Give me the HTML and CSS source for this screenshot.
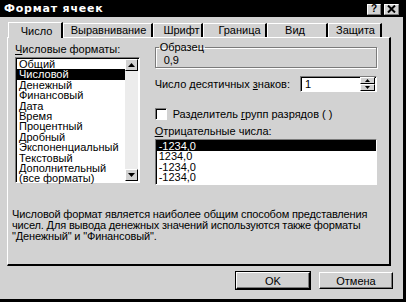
FILE: index.html
```html
<!DOCTYPE html>
<html>
<head>
    <meta charset="UTF-8">
    <title>Формат ячеек</title>
    <link rel="stylesheet" href="styles.css">
</head>
<body>
    <div class="window">
        <div class="titlebar">
            <span class="title">Формат ячеек</span>
            <div class="title-buttons">
                <span class="tbtn">?</span>
                <span class="tbtn tbtn-x">
                    <svg width="9" height="8" viewBox="0 0 9 8"><path d="M1 0.5 L8 7.5 M8 0.5 L1 7.5" stroke="#000" stroke-width="2"/></svg>
                </span>
            </div>
        </div>

        <div class="tabs">
            <div class="tab active">Число</div>
            <div class="tab">Выравнивание</div>
            <div class="tab">Шрифт</div>
            <div class="tab">Граница</div>
            <div class="tab">Вид</div>
            <div class="tab">Защита</div>
        </div>

        <div class="panel">
            <div class="columns">
                <div class="col-left">
                    <div class="label"><u>Ч</u>исловые форматы:</div>
                    <div class="listbox formats">
                        <ul class="items">
                            <li>Общий</li>
                            <li class="selected">Числовой</li>
                            <li>Денежный</li>
                            <li>Финансовый</li>
                            <li>Дата</li>
                            <li>Время</li>
                            <li>Процентный</li>
                            <li>Дробный</li>
                            <li>Экспоненциальный</li>
                            <li>Текстовый</li>
                            <li>Дополнительный</li>
                            <li>(все форматы)</li>
                        </ul>
                        <div class="scrollbar">
                            <div class="sbtn"><svg width="7" height="4" viewBox="0 0 7 4"><path d="M3.5 0 L7 4 L0 4 Z" fill="#000"/></svg></div>
                            <div class="track"></div>
                            <div class="sbtn"><svg width="7" height="4" viewBox="0 0 7 4"><path d="M0 0 L7 0 L3.5 4 Z" fill="#000"/></svg></div>
                        </div>
                    </div>
                </div>

                <div class="col-right">
                    <fieldset class="sample">
                        <legend>Образец</legend>
                        <div class="sample-value">0,9</div>
                    </fieldset>

                    <div class="decimals">
                        <span>Число десятичных <u>з</u>наков:</span>
                        <div class="spin">
                            <span class="spin-value">1</span>
                            <div class="spin-buttons">
                                <div class="spin-btn"><svg width="7" height="4" viewBox="0 0 7 4"><path d="M3.5 0 L7 4 L0 4 Z" fill="#000"/></svg></div>
                                <div class="spin-btn"><svg width="7" height="4" viewBox="0 0 7 4"><path d="M0 0 L7 0 L3.5 4 Z" fill="#000"/></svg></div>
                            </div>
                        </div>
                    </div>

                    <label class="check">
                        <span class="box"></span>
                        <span>Разделитель <u>г</u>рупп разрядов ( )</span>
                    </label>

                    <div class="label"><u>О</u>трицательные числа:</div>
                    <div class="listbox negatives">
                        <ul class="items">
                            <li class="selected">-1234,0</li>
                            <li>1234,0</li>
                            <li>-1234,0</li>
                            <li>-1234,0</li>
                        </ul>
                    </div>
                </div>
            </div>

            <p class="desc">Числовой формат является наиболее общим способом представления чисел. Для вывода денежных значений используются также форматы "Денежный" и "Финансовый".</p>
        </div>

        <div class="buttons">
            <button class="btn default">OK</button>
            <button class="btn">Отмена</button>
        </div>
    </div>
</body>
</html>
```

FILE: styles.css
```css
:root {
    --face: #d2d2d2;
    --light: #ffffff;
    --shadow: #7b7b7b;
    --dark: #000000;
}

* {
    margin: 0;
    padding: 0;
    box-sizing: border-box;
}

body {
    width: 406px;
    height: 302px;
    overflow: hidden;
    font-family: "Liberation Sans", Arial, sans-serif;
    font-size: 11px;
    color: #000;
    background: var(--face);
}

.window {
    width: 406px;
    height: 302px;
    background: var(--face);
    border-right: 3px solid var(--dark);
    border-bottom: 3px solid var(--dark);
    display: flex;
    flex-direction: column;
}

.titlebar {
    height: 17px;
    background: #000;
    display: flex;
    align-items: center;
    justify-content: space-between;
    padding: 0 4px 0 4px;
}

.title {
    color: #fff;
    font-family: "DejaVu Sans", sans-serif;
    font-weight: bold;
    font-size: 11px;
    letter-spacing: 0.8px;
}

.title-buttons {
    display: flex;
    gap: 3px;
    margin-top: 1px;
}

.tbtn {
    width: 14px;
    height: 11px;
    background: var(--face);
    border: 1px solid;
    border-color: var(--light) var(--shadow) var(--shadow) var(--light);
    display: flex;
    align-items: center;
    justify-content: center;
    font-weight: bold;
    font-size: 10px;
    line-height: 1;
}

.tbtn-x {
    width: 15px;
}

.tabs {
    display: flex;
    margin: 5px 0 0 8px;
    height: 15px;
    align-items: flex-end;
}

.tab {
    height: 14px;
    border-top: 1px solid var(--light);
    border-left: 1px solid var(--light);
    border-right: 2px solid var(--dark);
    font-size: 11px;
    line-height: 12px;
    text-align: center;
    white-space: nowrap;
    position: relative;
}

.tab.active {
    height: 16px;
    padding-top: 2px;
    margin-bottom: -1px;
    z-index: 1;
    background: var(--face);
}

.tab:nth-child(1) { width: 55px; padding-left: 3px; }
.tab:nth-child(2) { width: 90px; padding-left: 2px; }
.tab:nth-child(3) { width: 50px; padding-left: 8px; }
.tab:nth-child(4) { width: 64px; padding-left: 10px; }
.tab:nth-child(5) { width: 61px; padding-right: 4px; }
.tab:nth-child(6) { width: 54px; padding-left: 2px; }

.panel {
    margin: 0 12px 0 7px;
    height: 229px;
    border-top: 1px solid var(--light);
    border-left: 1px solid var(--light);
    border-right: 2px solid var(--dark);
    border-bottom: 2px solid var(--dark);
    padding: 5px 12px 0 7px;
    display: flex;
    flex-direction: column;
}

.columns {
    display: flex;
    gap: 15px;
}

.col-left {
    width: 125px;
    display: flex;
    flex-direction: column;
}

.col-right {
    width: 223px;
    display: flex;
    flex-direction: column;
}

.label {
    line-height: 12px;
}

.listbox {
    background: #fff;
    border: 1px solid;
    border-color: var(--shadow) var(--light) var(--light) var(--shadow);
    box-shadow: inset 1px 1px 0 #000;
    display: flex;
}

.formats {
    margin-top: 2px;
    height: 126px;
}

.items {
    list-style: none;
    flex: 1;
    padding: 1px 0 0 1px;
}

.items li {
    height: 10.4px;
    line-height: 10.4px;
    padding-left: 2px;
    white-space: nowrap;
}

.items li.selected {
    background: #000;
    color: #fff;
}

.scrollbar {
    width: 14px;
    display: flex;
    flex-direction: column;
    padding: 1px 1px 1px 0;
}

.sbtn {
    height: 12px;
    background: var(--face);
    border: 1px solid;
    border-color: var(--light) var(--dark) var(--dark) var(--light);
    display: flex;
    align-items: center;
    justify-content: center;
}

.track {
    flex: 1;
    background: #ececec;
}

.sample {
    border: 1px solid var(--shadow);
    box-shadow: 1px 1px 0 var(--light), inset 1px 1px 0 var(--light);
    height: 26px;
    padding: 0 0 0 8px;
    margin-top: -1px;
}

.sample legend {
    padding: 0 1px;
    margin-left: -5px;
    line-height: 10px;
}

.sample-value {
    line-height: 12px;
    margin-top: 2px;
}

.decimals {
    display: flex;
    align-items: center;
    justify-content: space-between;
    margin-top: 8px;
}

.spin {
    width: 77px;
    height: 16px;
    background: #fff;
    border: 1px solid;
    border-color: var(--shadow) var(--light) var(--light) var(--shadow);
    box-shadow: inset 1px 1px 0 #000;
    display: flex;
    align-items: center;
    justify-content: space-between;
    padding: 0 1px 0 4px;
}

.spin-buttons {
    display: flex;
    flex-direction: column;
}

.spin-btn {
    width: 15px;
    height: 7px;
    background: var(--face);
    border: 1px solid;
    border-color: var(--light) var(--dark) var(--dark) var(--light);
    display: flex;
    align-items: center;
    justify-content: center;
}

.spin-btn svg {
    width: 5px;
    height: 3px;
}

.check {
    display: flex;
    align-items: center;
    gap: 6px;
    margin-top: 16px;
}

.box {
    width: 12px;
    height: 12px;
    background: #fff;
    border: 1px solid;
    border-color: var(--shadow) var(--light) var(--light) var(--shadow);
    box-shadow: inset 1px 1px 0 #000;
}

.check + .label {
    margin-top: 5px;
}

.negatives {
    margin-top: 2px;
    height: 46px;
}

.desc {
    margin: 24px 0 0 -3px;
    line-height: 11px;
    font-size: 11px;
    letter-spacing: -0.15px;
    width: 375px;
}

.buttons {
    display: flex;
    justify-content: flex-end;
    gap: 9px;
    padding: 6px 10px 0 0;
}

.btn {
    width: 74px;
    height: 17px;
    background: var(--face);
    font-family: "Liberation Sans", Arial, sans-serif;
    font-size: 11px;
    border: 1px solid;
    border-color: var(--light) var(--dark) var(--dark) var(--light);
    box-shadow: inset -1px -1px 0 var(--shadow);
}

.btn.default {
    outline: 1px solid #000;
}
```
